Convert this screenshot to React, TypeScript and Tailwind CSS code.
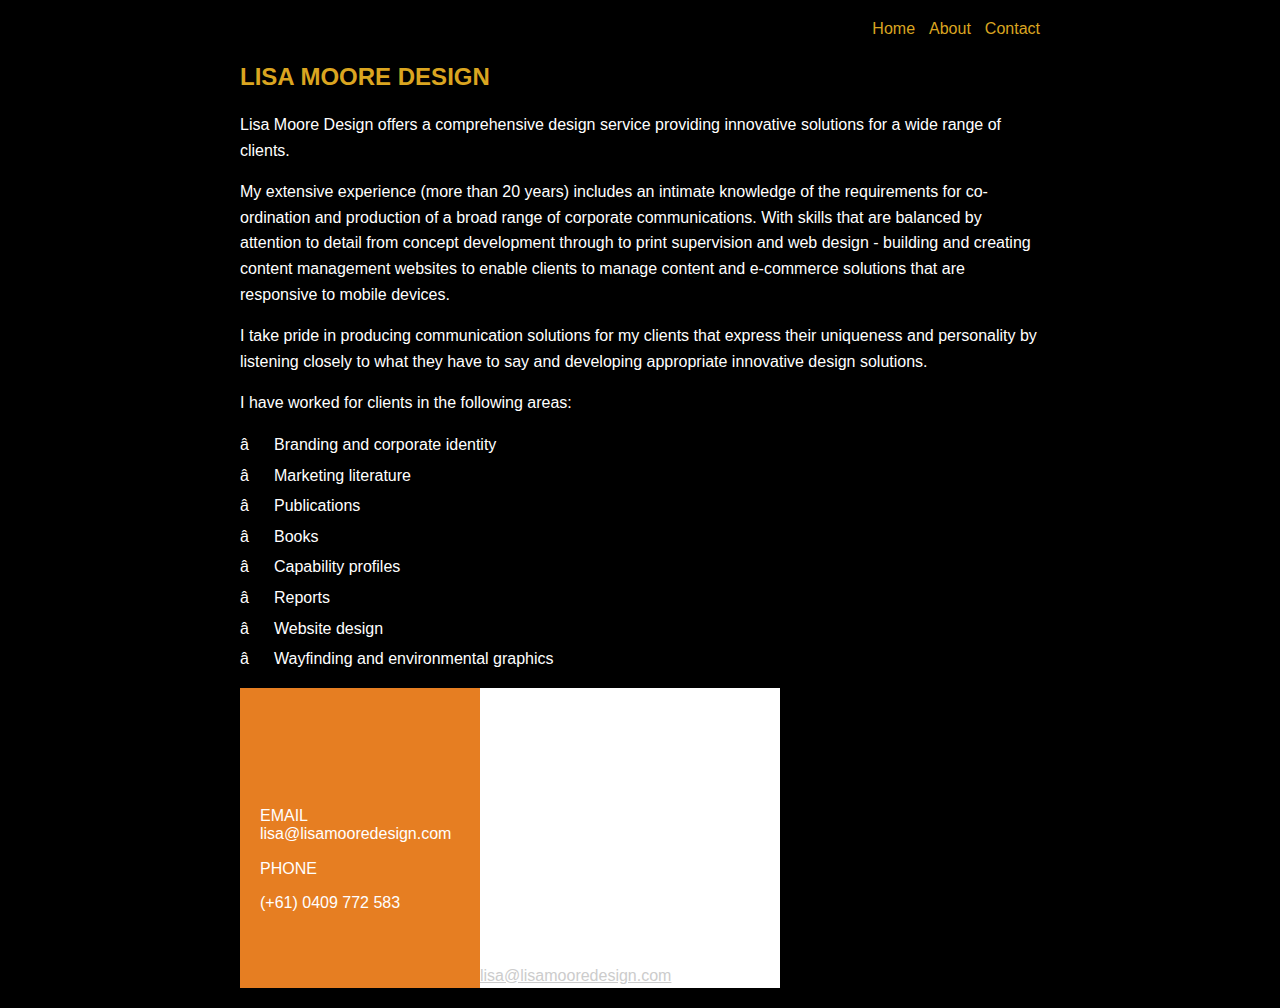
import React from 'react';

const NAV = ['Home', 'About', 'Contact'];

const AREAS = [
  'Branding and corporate identity',
  'Marketing literature',
  'Publications',
  'Books',
  'Capability profiles',
  'Reports',
  'Website design',
  'Wayfinding and environmental graphics',
];

export default function App() {
  return (
    <div className="min-h-[1008px] bg-black text-white font-['Liberation_Sans',Arial,sans-serif] text-[16px]">
      <div className="w-[800px] mx-auto pb-[20px]">
        {/* Top nav */}
        <nav className="flex justify-end gap-[14px] pt-[19px] leading-[20px] text-[#daa520]">
          {NAV.map((item) => (
            <a key={item} href="#" className="text-[#daa520]">
              {item}
            </a>
          ))}
        </nav>

        <h1 className="mt-[24px] text-[24px] font-bold leading-[28px] text-[#daa520]">LISA MOORE DESIGN</h1>

        <div className="mt-[21px] leading-[25.6px] space-y-[16px]">
          <p>
            Lisa Moore Design offers a comprehensive design service providing innovative solutions for a wide range of
            clients.
          </p>
          <p>
            My extensive experience (more than 20 years) includes an intimate knowledge of the requirements for
            co-ordination and production of a broad range of corporate communications. With skills that are balanced by
            attention to detail from concept development through to print supervision and web design - building and
            creating content management websites to enable clients to manage content and e-commerce solutions that are
            responsive to mobile devices.
          </p>
          <p>
            I take pride in producing communication solutions for my clients that express their uniqueness and
            personality by listening closely to what they have to say and developing appropriate innovative design
            solutions.
          </p>
          <p>I have worked for clients in the following areas:</p>
        </div>

        <ul className="mt-[16px] space-y-[5px] leading-[25.6px]">
          {AREAS.map((area) => (
            <li key={area} className="flex">
              <span className="w-[34px] shrink-0">â</span>
              <span>{area}</span>
            </li>
          ))}
        </ul>

        {/* Contact block */}
        <div className="mt-[16px] flex w-[540px] h-[300px]">
          <div className="w-[240px] bg-[#e67e22] px-[20px] pt-[119px] leading-[18.4px] space-y-[16px]">
            <p>
              EMAIL
              <br />
              lisa@lisamooredesign.com
            </p>
            <p>PHONE</p>
            <p>(+61) 0409 772 583</p>
          </div>
          <div className="w-[300px] bg-white flex flex-col justify-end pb-[3px]">
            <a href="#" className="text-[#cccccc] underline leading-[18px] self-start">
              lisa@lisamooredesign.com
            </a>
          </div>
        </div>
      </div>
    </div>
  );
}
